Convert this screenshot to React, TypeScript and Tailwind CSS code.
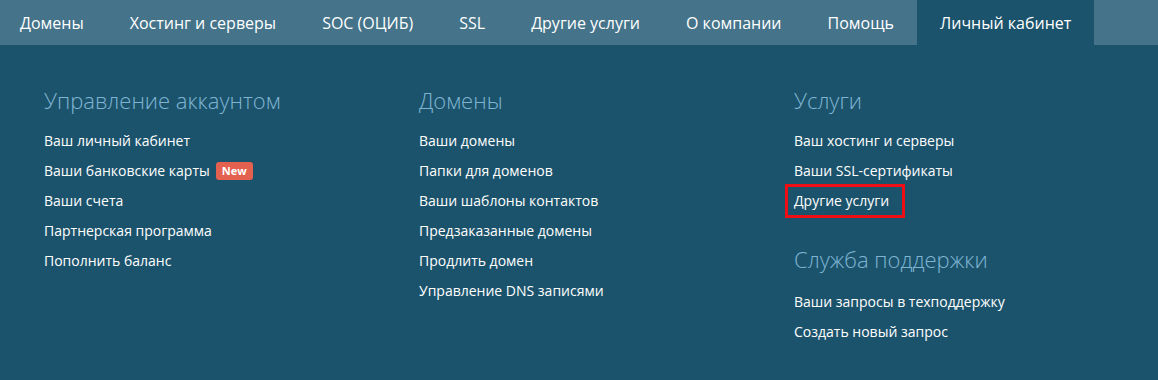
import React from "react";

const navItems = [
  "Домены",
  "Хостинг и серверы",
  "SOC (ОЦИБ)",
  "SSL",
  "Другие услуги",
  "О компании",
  "Помощь",
  "Личный кабинет",
];

function Heading({ children, className = "" }: { children: React.ReactNode; className?: string }) {
  return <h3 className={`text-[22px] font-light leading-[30px] text-[#7fb5d3] ${className}`}>{children}</h3>;
}

function Links({ items, className = "mt-[11px]" }: { items: React.ReactNode[]; className?: string }) {
  return (
    <ul className={`flex flex-col ${className}`}>
      {items.map((it, i) => (
        <li key={i} className="flex h-[30px] items-center text-[14px] leading-[30px] text-white">
          {it}
        </li>
      ))}
    </ul>
  );
}

export default function App() {
  return (
    <div
      className="h-[380px] w-[1158px] bg-[#1c536c]"
      style={{ fontFamily: '"Open Sans", "Noto Sans", sans-serif' }}
    >
      <nav className="flex h-[46px] border-b-[1px] border-[#1c536c] bg-[#44738a]">
        <div className="-ml-[3px] flex">
          {navItems.map((item, i) => (
            <a
              key={item}
              className={`flex h-[45px] items-center px-[23px] text-[16px] text-white ${
                i === navItems.length - 1 ? "bg-[#1c536c]" : ""
              }`}
            >
              {item}
            </a>
          ))}
        </div>
      </nav>

      <div className="grid grid-cols-[375px_375px_1fr] pl-[44px] pt-[39px]">
        <div>
          <Heading>Управление аккаунтом</Heading>
          <Links
            items={[
              "Ваш личный кабинет",
              <span className="flex items-center">
                Ваши банковские карты
                <span className="ml-[6px] rounded-[3px] bg-[#e4604f] px-[6px] text-[11px] font-bold leading-[18px] text-white">
                  New
                </span>
              </span>,
              "Ваши счета",
              "Партнерская программа",
              "Пополнить баланс",
            ]}
          />
        </div>
        <div>
          <Heading>Домены</Heading>
          <Links
            items={[
              "Ваши домены",
              "Папки для доменов",
              "Ваши шаблоны контактов",
              "Предзаказанные домены",
              "Продлить домен",
              "Управление DNS записями",
            ]}
          />
        </div>
        <div>
          <Heading>Услуги</Heading>
          <Links
            items={[
              "Ваш хостинг и серверы",
              "Ваши SSL-сертификаты",
              <span className="-my-[2px] -ml-[9px] flex h-[34px] w-[120px] items-center border-[3px] border-[#ee0f14] pl-[6px]">
                Другие услуги
              </span>,
            ]}
          />
          <Heading className="mt-[28px]">Служба поддержки</Heading>
          <Links className="mt-[13px]" items={["Ваши запросы в техподдержку", "Создать новый запрос"]} />
        </div>
      </div>
    </div>
  );
}
